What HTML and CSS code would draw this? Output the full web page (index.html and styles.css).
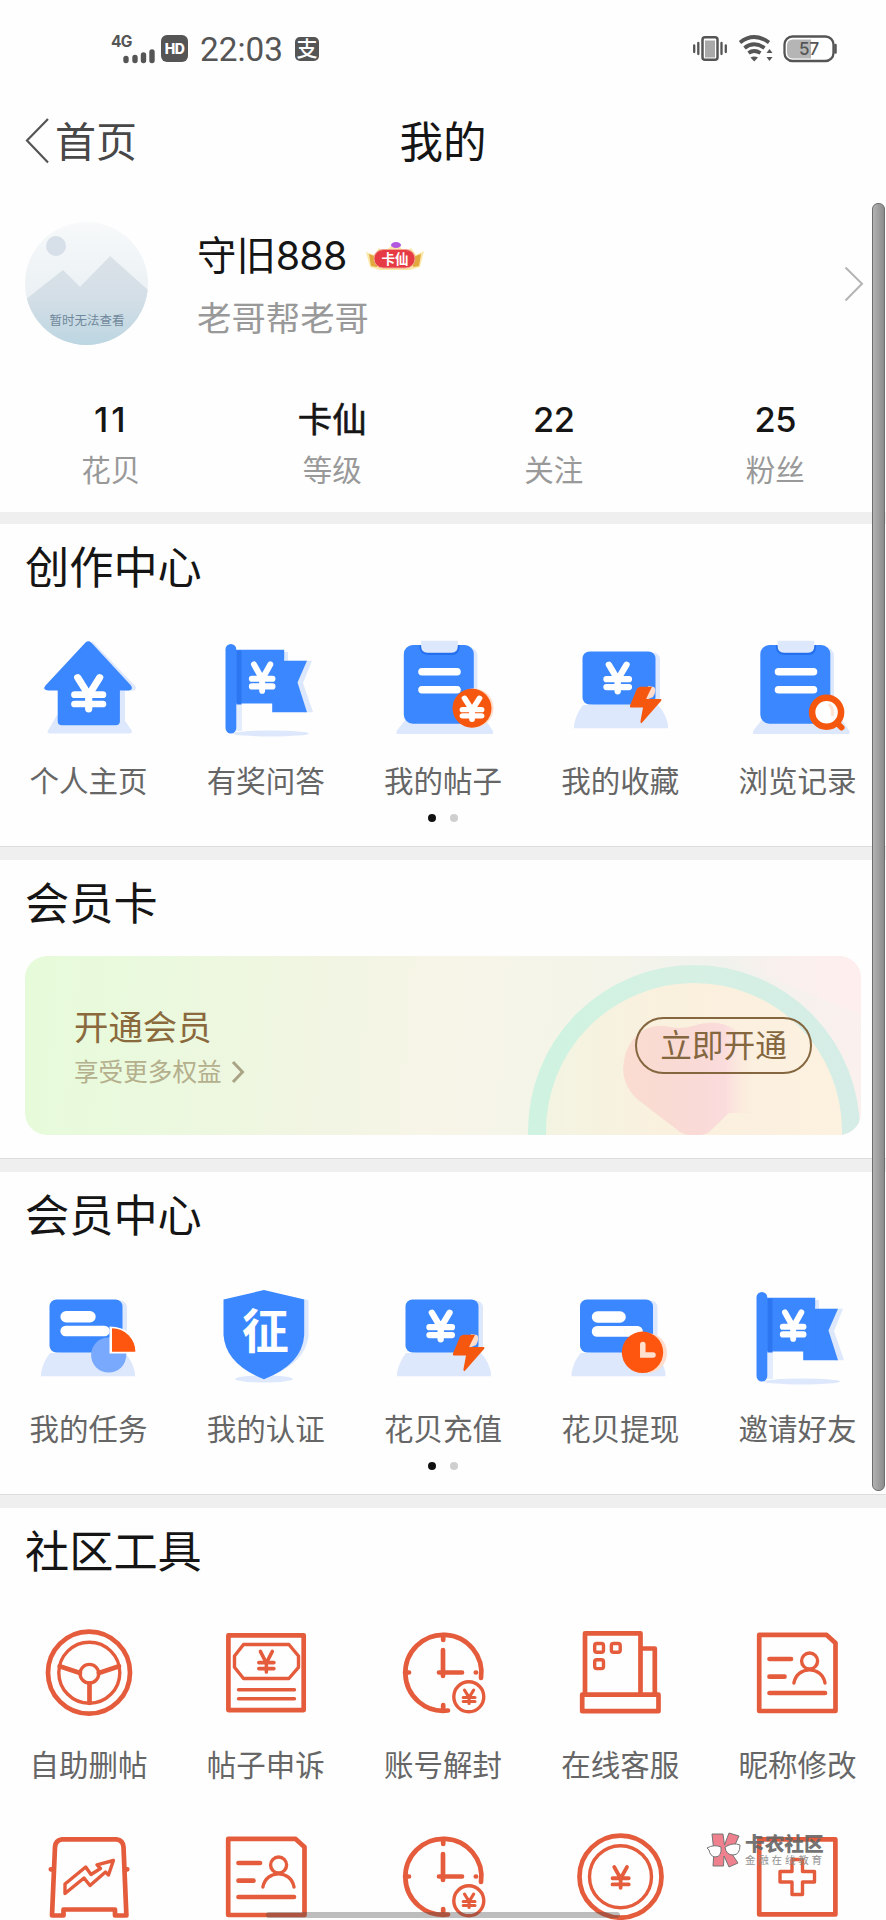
FILE: index.html
```
<!DOCTYPE html>
<html lang="zh-CN">
<head>
<meta charset="utf-8">
<title>我的</title>
<link rel="stylesheet" href="styles.css">
</head>
<body>
<svg class="defs" width="0" height="0" aria-hidden="true">
  <defs>
    <path id="yen" d="M3 0 14 19 25 0M0 18.5H28M0 28.5H28M14 19V34" fill="none" stroke-linecap="round"/>
    <symbol id="i-house" viewBox="0 0 108 108">
      <path d="M22 83H86L97 99Q97 101.500 94 101.500H15Q12 101.500 12.700 99Z" fill="#dde8fc"/>
      <path d="M57 9 101 55Q101 59 96 59H90V91H60Z" fill="#dde8fc"/>
      <path d="M50.500 10.500Q53.400 8 56.200 10.500L96 53.500Q98.500 58 93.500 58.500H84.900V89Q84.900 93.300 80.500 93.300H27Q22.700 93.300 22.700 89V58.500H13.500Q7 58 10.500 53.500Z" fill="#3a87ff"/>
      <use href="#yen" transform="translate(39.700 45.500) scale(1 .93)" stroke="#fff" stroke-width="7.200"/>
    </symbol>
    <symbol id="i-flag" viewBox="0 0 108 108">
      <path d="M70 20H76V28.700H100L91 51 101 80.300H92Z" fill="#dde8fc"/>
      <path d="M24 72H30V99H24Z" fill="#e4edfd"/>
      <ellipse cx="59" cy="101.500" rx="38" ry="3" fill="#dde8fc"/>
      <path d="M60.200 28.700H95L85.500 50.600 95 80.300H60.200Z" fill="#3a87ff"/>
      <path d="M24 17.700H72.200V71.500H24Z" fill="#3a87ff"/>
      <path d="M24.500 18.500H29.500V72.500H24.500Z" fill="#2c76f2"/>
      <rect x="13.500" y="12" width="10.800" height="89.500" rx="5.400" fill="#3a87ff"/>
      <use href="#yen" transform="translate(39.800 32.500) scale(.74 .77)" stroke="#fff" stroke-width="8"/>
    </symbol>
    <symbol id="i-board" viewBox="0 0 108 108" overflow="visible">
      <path d="M22 84H96L106.500 99V102H10V99Z" fill="#dde8fc"/>
      <rect x="22" y="15" width="69" height="76" rx="9" fill="#dde8fc"/>
      <rect x="17.300" y="13" width="70" height="78.700" rx="9" fill="#3a87ff"/>
      <path d="M33 13H73V16Q72 23 66 23H42Q34 23 33 16Z" fill="#246fee"/>
      <path d="M34.600 8.700H71.300V14Q71.300 20.700 65 20.700H41Q34.600 20.700 34.600 14Z" fill="#dde8fc"/>
      <path d="M35.500 39.700H70.500M35.500 57.700H70.500" stroke="#fff" stroke-width="7.600" stroke-linecap="round"/>
    </symbol>
    <symbol id="i-post" viewBox="0 0 108 108">
      <use href="#i-board" x="-2.500" width="108" height="108"/>
      <circle cx="85" cy="76" r="19.500" fill="#ffdccb"/>
      <circle cx="83" cy="76.300" r="19.500" fill="#f6570f"/>
      <use href="#yen" transform="translate(73.500 66.200) scale(.68 .62)" stroke="#fff" stroke-width="8.500"/>
    </symbol>
    <symbol id="i-history" viewBox="0 0 108 108">
      <use href="#i-board" width="108" height="108"/>
      <circle cx="83.600" cy="80.300" r="14.500" fill="#fff" stroke="#f6570f" stroke-width="6.500"/>
      <path d="M86 72Q91 77 89 84" stroke="#ffe3d4" stroke-width="3" fill="none"/>
      <path d="M94 91 98.500 95.500" stroke="#f6570f" stroke-width="6" stroke-linecap="round"/>
    </symbol>
    <symbol id="i-screen" viewBox="0 0 108 108" overflow="visible">
      <path d="M17 73H92Q100 82 102 93V96.300H8V93Q10 82 17 73Z" fill="#dde8fc"/>
      <rect x="22" y="20.500" width="72" height="52.500" rx="7" fill="#dde8fc"/>
      <rect x="16.500" y="19.500" width="73" height="53" rx="7" fill="#3a87ff"/>
    </symbol>
    <symbol id="i-charge" viewBox="0 0 108 108">
      <use href="#i-screen" width="108" height="108"/>
      <use href="#yen" transform="translate(40.500 32.800) scale(.8 .78)" stroke="#fff" stroke-width="8"/>
      <path d="M82 54 88 55Q91 58 87 65L80 68Z" fill="#ffdccb"/>
      <path d="M74 54.700H86L80 67H95Q96 68 95 69L75.500 91.300Q74 91 74.500 89L77 75.500H64.500Q63.500 75 64 73.500L71 56.500Z" fill="#f6570f"/>
    </symbol>
    <symbol id="i-withdraw" viewBox="0 0 108 108">
      <use href="#i-screen" x="-2.500" width="108" height="108"/>
      <rect x="25.800" y="31.300" width="34" height="11.400" rx="5.700" fill="#fff"/>
      <rect x="25.800" y="46" width="51" height="10.700" rx="5.300" fill="#fff"/>
      <circle cx="81" cy="73" r="20" fill="#ffdccb"/>
      <circle cx="76.500" cy="72.300" r="20.700" fill="#ff560f"/>
      <path d="M76.800 64.500V75H87" fill="none" stroke="#ffe0cf" stroke-width="5.500" stroke-linecap="round"/>
    </symbol>
    <symbol id="i-task" viewBox="0 0 108 108">
      <use href="#i-screen" x="-2" width="108" height="108"/>
      <rect x="25.400" y="31" width="35.300" height="11.400" rx="5.700" fill="#fff"/>
      <rect x="25.400" y="45.700" width="49.300" height="10.500" rx="5.200" fill="#fff"/>
      <circle cx="73.700" cy="75" r="17.600" fill="#79a9fc"/>
      <path d="M74.500 73.500V46.500Q101 47 103.500 73.500Z" fill="#fff"/>
      <path d="M77 71.700V48.300A23.400 23.400 0 0 1 100.400 71.700Z" fill="#ff560f"/>
    </symbol>
    <symbol id="i-shield" viewBox="0 0 108 108">
      <ellipse cx="52" cy="99" rx="29" ry="3.500" fill="#dde8fc"/>
      <path d="M57 12 96.500 20V56Q94 82 57 97Z" fill="#dde8fc"/>
      <path d="M52 10 92.200 19.500V55Q90.500 84 52 99.300 13.500 84 11.500 55V19.500Z" fill="#3a87ff"/>
      <text class="shield-text" x="53.200" y="67.500" text-anchor="middle">征</text>
    </symbol>
    <symbol id="i-wheel" viewBox="0 0 108 108">
      <g class="line">
        <circle cx="54" cy="56.700" r="41"/>
        <g class="thin"><circle cx="54.300" cy="56.700" r="30.500"/><circle cx="54.400" cy="57.700" r="9.300"/></g>
        <path d="M45 57 24.700 50.200M63.800 57 84 50.200M54.500 67.500V87"/>
      </g>
    </symbol>
    <symbol id="i-appeal" viewBox="0 0 108 108">
      <g class="line">
        <rect x="16.400" y="19.400" width="75.300" height="74.700"/>
        <g class="thin"><path d="M31.500 28.500H76.900L86.500 40V51.300L76.900 62.500H31.500L22.500 51.300V40Z"/>
        <path d="M26.500 73.700H82.500M26.500 82.700H82.500"/></g>
        <use href="#yen" transform="translate(46.800 35.500) scale(.54 .6)" stroke-width="6.500"/>
      </g>
    </symbol>
    <symbol id="i-unlock" viewBox="0 0 108 108">
      <g class="line">
        <path d="M92 62A38 38 0 1 0 59 94.500"/>
        <path d="M16 56.500H20M54.200 19V24M54.200 89V94M86.800 56.500H87M54 34V60M50 56.500H73"/>
        <g class="thin"><circle cx="79.800" cy="80.800" r="15"/></g>
        <use href="#yen" transform="translate(74.200 74) scale(.42 .4)" stroke-width="7.500"/>
      </g>
    </symbol>
    <symbol id="i-service" viewBox="0 0 108 108">
      <g class="line">
        <path d="M19 78V17.300H74.500V78M76 32.500H88.800V78"/>
        <rect x="16.200" y="78.700" width="76.300" height="16.500"/>
        <g class="thin"><rect x="28.700" y="27.500" width="8.800" height="8.800" rx="2"/><rect x="45.400" y="27.500" width="8.800" height="8.800" rx="2"/><rect x="28.700" y="43.800" width="8.800" height="8.800" rx="2"/></g>
      </g>
    </symbol>
    <symbol id="i-id" viewBox="0 0 108 108">
      <g class="line">
        <path d="M16.200 18.900H83.600L92.500 27V95H16.200Z"/>
        <path d="M26.500 43H48M26.500 60.700H41.500M26.500 77H82"/>
        <g class="thin"><circle cx="66.600" cy="45" r="8"/><path d="M50.900 67C54 49.500 79 49.500 82 67"/></g>
      </g>
    </symbol>
    <symbol id="i-trend" viewBox="0 0 108 108">
      <g class="line">
        <path d="M27 19.300H81.500Q88 20 88.500 27L91.400 95.500H80V89.500H28.500V95.500H17L20 27Q20.500 20 27 19.300Z"/>
        <path d="M15.800 49.300H18M90.500 49.300H92.300"/>
        <path class="thin" d="M30 73.500V64L50.700 47 56 54.500 65.500 48.500 62 44.800 78.400 40.500 73.500 55 70.500 52 55 65.500 49 58Z"/>
      </g>
    </symbol>
    <symbol id="i-coin" viewBox="0 0 108 108">
      <g class="line">
        <circle cx="54.500" cy="56.700" r="41"/>
        <circle class="thin" cx="54.500" cy="56.700" r="31"/>
        <use href="#yen" transform="translate(46.500 47) scale(.58 .61)" stroke-width="6.500"/>
      </g>
    </symbol>
    <symbol id="i-plus" viewBox="0 0 108 108">
      <g class="line">
        <rect x="16.200" y="19.400" width="76.200" height="75"/>
        <path class="thin" d="M49 39.500H59.500V51.500H71.500V62H59.500V74.500H49V62H37V51.500H49Z"/>
      </g>
    </symbol>
  </defs>
</svg>

<div class="page">
  <div class="status">
    <svg class="signal" width="46" height="32" viewBox="0 0 46 32">
      <text x="0" y="14">4G</text>
      <path d="M15 25.500V27.500M24 24.500V27.500M32.500 22V27.500M41 19V27.500" stroke="#555" stroke-width="5.400" stroke-linecap="round"/>
    </svg>
    <span class="hd">HD</span>
    <span class="time">22:03</span>
    <span class="pay">支</span>
    <svg class="vibrate" width="36" height="28" viewBox="0 0 36 28">
      <rect x="10.500" y="2.200" width="15" height="22.600" rx="2.500" fill="#fff" stroke="#555" stroke-width="2.500"/>
      <rect x="13" y="5.500" width="10" height="17" fill="#a9a9a9"/>
      <path d="M6.300 8V19M2.200 10.500V17M29.500 8V19M33.800 10.500V17" stroke="#555" stroke-width="2.300" stroke-linecap="round"/>
    </svg>
    <svg class="wifi" width="36" height="28" viewBox="0 0 36 28">
      <path d="M2 7.500Q16 -3.500 31 7.500M6.500 13Q16 5.500 26.500 13M10.500 18Q16 14 22.500 18" fill="none" stroke="#555" stroke-width="3.800"/>
      <path d="M12.500 22.500Q16 20.500 20 22.500L16.200 26.500Z" fill="#555"/>
      <path d="M28.500 18 31.500 14 34.500 18ZM28.500 22 31.500 26 34.500 22Z" fill="#555"/>
    </svg>
    <svg class="battery" width="56" height="28" viewBox="0 0 56 28">
      <rect x="1.500" y="1.500" width="49" height="24.500" rx="8" fill="#fff" stroke="#555" stroke-width="2.300"/>
      <path d="M10 4.500H28V23.500H10Q4 23.500 4 17V10.500Q4 4.500 10 4.500Z" fill="#b5b5b5"/>
      <path d="M52.500 10V17.500" stroke="#555" stroke-width="2.500" stroke-linecap="round"/>
      <text x="26" y="20" text-anchor="middle">57</text>
    </svg>
  </div>

  <header class="nav">
    <a class="back"><svg width="24" height="48" viewBox="0 0 24 48"><path d="M23 1 2 22.500 23 44.500" fill="none" stroke="#555" stroke-width="2.200"/></svg>首页</a>
    <h1>我的</h1>
    <span></span>
  </header>

  <section class="profile">
    <svg class="avatar" width="123" height="123" viewBox="0 0 123 123">
      <defs>
        <clipPath id="round"><circle cx="61.500" cy="61.500" r="61.500"/></clipPath>
        <linearGradient id="sky" x2="0" y2="1"><stop stop-color="#f7f9fa"/><stop offset="1" stop-color="#e2ebf0"/></linearGradient>
        <linearGradient id="hill" x2="0" y2="1"><stop stop-color="#dbe2e8"/><stop offset=".5" stop-color="#d3dee6"/><stop offset="1" stop-color="#bcd6e2"/></linearGradient>
      </defs>
      <g clip-path="url(#round)">
        <path d="M0 0H123V123H0Z" fill="url(#sky)"/>
        <circle cx="31" cy="24" r="10" fill="#d7e0e8"/>
        <path d="M0 78 38 48 55 65 85 34 123 68V123H0Z" fill="url(#hill)"/>
        <text x="62" y="103" text-anchor="middle">暂时无法查看</text>
      </g>
    </svg>
    <div class="who">
      <div class="name">守旧<span class="num">888</span>
        <svg class="rank" width="60" height="32" viewBox="0 0 60 32">
          <path d="M1 12 9 15 14 8 19 12 30 3 41 12 46 8 51 15 59 11 55 27 45 30H15L5 27Z" fill="#fbe7a8"/>
          <path d="M4 14 12 17V27L6 26ZM56 14 48 17V27L54 26Z" fill="#e0a83d"/>
          <ellipse cx="31" cy="5" rx="5" ry="3" fill="#b457e0"/>
          <rect x="9" y="9.500" width="41" height="18.500" rx="9.200" fill="#e63b45" stroke="#f3a08e" stroke-width="1"/>
          <text x="30" y="23.500" text-anchor="middle">卡仙</text>
        </svg>
      </div>
      <div class="bio">老哥帮老哥</div>
    </div>
    <svg class="more" width="20" height="36" viewBox="0 0 20 36"><path d="M1.500 1.500 18 17.800 1.500 34.500" fill="none" stroke="#b4b4b4" stroke-width="2"/></svg>
  </section>

  <section class="stats">
    <div><b class="ones">11</b><span>花贝</span></div>
    <div><b class="word">卡仙</b><span>等级</span></div>
    <div><b>22</b><span>关注</span></div>
    <div><b>25</b><span>粉丝</span></div>
  </section>

  <section class="panel">
    <h2>创作中心</h2>
    <div class="grid">
      <div class="item"><svg class="icon"><use href="#i-house"/></svg><span>个人主页</span></div>
      <div class="item"><svg class="icon"><use href="#i-flag"/></svg><span>有奖问答</span></div>
      <div class="item"><svg class="icon"><use href="#i-post"/></svg><span>我的帖子</span></div>
      <div class="item"><svg class="icon"><use href="#i-charge"/></svg><span>我的收藏</span></div>
      <div class="item"><svg class="icon"><use href="#i-history"/></svg><span>浏览记录</span></div>
    </div>
    <div class="dots"><i class="on"></i><i></i></div>
  </section>

  <section class="panel vip">
    <h2>会员卡</h2>
    <div class="card">
      <svg class="art" width="836" height="179" viewBox="0 0 836 179">
        <defs>
          <linearGradient id="ring"><stop stop-color="#cff3e0"/><stop offset=".5" stop-color="#d6f0e4"/><stop offset="1" stop-color="#d5ede6"/></linearGradient>
          <linearGradient id="disc"><stop stop-color="#f3f4e2"/><stop offset=".4" stop-color="#faf0de"/><stop offset="1" stop-color="#fdf1e0"/></linearGradient>
          <linearGradient id="heart"><stop stop-color="#fadcd0"/><stop offset=".55" stop-color="#f9dad6"/><stop offset=".75" stop-color="#fbdcdd"/><stop offset="1" stop-color="#fcefdd" stop-opacity="0"/></linearGradient>
          <linearGradient id="corner"><stop stop-color="#fdf0ec" stop-opacity="0"/><stop offset="1" stop-color="#feeeee"/></linearGradient>
        </defs>
        <path d="M690 0H836V58L790 40Z" fill="url(#corner)"/>
        <circle cx="669" cy="175" r="157" fill="url(#disc)" stroke="url(#ring)" stroke-width="18"/>
        <path d="M655 176 612 143Q592 124 601 96 613 67 640 70 655 74 668 70 705 58 725 90 738 120 733 157H704L683 177Q668 183 655 176Z" fill="url(#heart)"/>
      </svg>
      <div class="offer">
        <strong>开通会员</strong>
        <span>享受更多权益<svg width="14" height="24" viewBox="0 0 14 24"><path d="M2 2 11.500 12 2 22" fill="none" stroke="#a9a486" stroke-width="3"/></svg></span>
      </div>
      <span class="open">立即开通</span>
    </div>
  </section>

  <section class="panel">
    <h2>会员中心</h2>
    <div class="grid">
      <div class="item"><svg class="icon"><use href="#i-task"/></svg><span>我的任务</span></div>
      <div class="item"><svg class="icon"><use href="#i-shield"/></svg><span>我的认证</span></div>
      <div class="item"><svg class="icon"><use href="#i-charge"/></svg><span>花贝充值</span></div>
      <div class="item"><svg class="icon"><use href="#i-withdraw"/></svg><span>花贝提现</span></div>
      <div class="item"><svg class="icon"><use href="#i-flag"/></svg><span>邀请好友</span></div>
    </div>
    <div class="dots"><i class="on"></i><i></i></div>
  </section>

  <section class="panel tools">
    <h2>社区工具</h2>
    <div class="grid">
      <div class="item"><svg class="icon"><use href="#i-wheel"/></svg><span>自助删帖</span></div>
      <div class="item"><svg class="icon"><use href="#i-appeal"/></svg><span>帖子申诉</span></div>
      <div class="item"><svg class="icon"><use href="#i-unlock"/></svg><span>账号解封</span></div>
      <div class="item"><svg class="icon"><use href="#i-service"/></svg><span>在线客服</span></div>
      <div class="item"><svg class="icon"><use href="#i-id"/></svg><span>昵称修改</span></div>
      <div class="item"><svg class="icon"><use href="#i-trend"/></svg></div>
      <div class="item"><svg class="icon"><use href="#i-id"/></svg></div>
      <div class="item"><svg class="icon"><use href="#i-unlock"/></svg></div>
      <div class="item"><svg class="icon"><use href="#i-coin"/></svg></div>
      <div class="item"><svg class="icon"><use href="#i-plus"/></svg></div>
    </div>
  </section>

  <div class="watermark">
    <svg width="36" height="36" viewBox="0 0 36 36">
      <path d="M6 2H17L18.500 13 23 1 33 4 28 15 24 19 32 31 23 35 18 24 17.500 34H7L8 20Z" fill="#ee7484" stroke="#666" stroke-width="1"/>
      <path d="M1 16Q8 12 15 15 16 25 9 25 4 24 3 18ZM19 15Q27 10 34 13 34 23 27 23 20 23 19 15Z" fill="#fff" stroke="#666" stroke-width="1"/>
    </svg>
    <div><b>卡农社区</b><span>金融在线教育</span></div>
  </div>
  <div class="scrollbar"></div>
  <div class="homebar"></div>
</div>
</body>
</html>
```
FILE: styles.css
```
* { box-sizing: border-box; }
body {
  margin: 0;
  background: #fefefe;
  color: #151515;
  font-family: Inter, "Noto Sans CJK SC", sans-serif;
}
h1, h2 { margin: 0; font-weight: 400; }
svg { display: block; flex: none; }
.defs { position: absolute; }
.page { position: relative; width: 886px; height: 1920px; overflow: hidden; }

.status { display: flex; align-items: center; height: 97px; padding: 0 47px 0 111px; color: #555; }
.signal { margin-right: 4px; }
.signal text { font: 700 15.500px Inter, sans-serif; fill: #555; letter-spacing: -.8px; }
.hd {
  width: 27px; height: 27px; border-radius: 6px; background: #555; color: #fff;
  font: 800 14px/27px Inter, sans-serif; text-align: center; letter-spacing: -.5px;
}
.time { margin-left: 12px; width: 95px; padding-top: 2px; font: 400 33.300px/40px Roboto, sans-serif; }
.pay {
  width: 24px; height: 24px; border-radius: 5px; background: #555; color: #fff;
  font-size: 21px; line-height: 24px; font-weight: 500; text-align: center; overflow: hidden;
}
.vibrate { margin-left: auto; }
.wifi { margin-left: 10px; }
.battery { margin-left: 9px; }
.battery text { font: 500 17px Inter, sans-serif; fill: #555; }

.nav { display: grid; grid-template-columns: 1fr auto 1fr; align-items: center; height: 90px; padding: 0 25px; }
.back { display: flex; align-items: center; gap: 6px; color: #484848; font-size: 41px; line-height: 60px; }
.nav h1 { font-size: 43.500px; line-height: 60px; }

.profile { display: flex; align-items: flex-start; height: 190px; padding: 35px 22px 0 25px; }
.avatar text { font-size: 12.500px; fill: #70889b; }
.who { margin-left: 49px; }
.name { display: flex; align-items: center; height: 68px; font-size: 39.400px; line-height: 68px; }
.num { letter-spacing: -.8px; }
.rank { margin-left: 18px; }
.rank text { font-size: 13.500px; font-weight: 700; fill: #fff; }
.bio { font-size: 34.400px; line-height: 58px; color: #999; }
.more { margin: 44px 0 0 auto; }

.stats { display: grid; grid-template-columns: repeat(4, 1fr); height: 135px; padding-top: 18px; text-align: center; }
.stats b { display: block; font-size: 34.400px; line-height: 50px; font-weight: 500; letter-spacing: -.4px; }
.stats .ones { letter-spacing: 3px; text-indent: 1px; }
.stats .word { font-weight: 400; letter-spacing: 0; -webkit-text-stroke: .6px #151515; }
.stats span { display: block; font-size: 29.500px; line-height: 50px; color: #999; }

.panel { height: 335px; border-top: 12px solid #efefef; }
.panel h2 { padding-left: 25px; font-size: 44.200px; line-height: 88px; height: 108px; }
.panel + .panel { height: 336px; border-top-width: 13px; box-shadow: 0 -1px #ddd; }
.panel.vip { height: 312px; }
.panel.vip h2 { height: 96px; }
.panel.tools { height: 425px; }
.grid { display: grid; grid-template-columns: repeat(5, 1fr); grid-auto-rows: 204px; }
.item { display: flex; flex-direction: column; align-items: center; }
.icon { width: 108px; height: 108px; }
.item span { margin-top: 19px; font-size: 29.500px; line-height: 44px; color: #666; white-space: nowrap; }
.shield-text { font-size: 47px; font-weight: 700; fill: #fff; }
.line { fill: none; stroke: #e45c3c; stroke-width: 4.700; stroke-linejoin: round; stroke-linecap: round; }
.thin { stroke-width: 3.400; }
.dots { display: flex; gap: 14px; margin: -22px 0 0 428px; }
.dots i { width: 8px; height: 8px; border-radius: 50%; background: #cfcfcf; }
.dots .on { background: #111; }

.card {
  position: relative; display: flex; align-items: center; justify-content: space-between;
  width: 836px; height: 179px; margin-left: 25px; padding: 0 49px; border-radius: 22px; overflow: hidden;
  background: linear-gradient(95deg, #e6fbda 0, #ebf9de 17%, #f1f5e2 35%, #f7f5e8 50%, #f4f4e9 66%, #f1f2ed 82%, #fbf0ee 100%);
}
.art { position: absolute; inset: 0; }
.offer { position: relative; padding-top: 4px; }
.offer strong { display: block; font-weight: 400; font-size: 34.400px; line-height: 48px; color: #8a6a3c; }
.offer span { display: flex; align-items: center; gap: 9px; font-size: 24.600px; line-height: 40px; color: #b4af8c; }
.open {
  position: relative; width: 177px; height: 57px; border: 2.500px solid #84663f; border-radius: 29px;
  font-size: 31.700px; line-height: 54px; text-align: center; color: #84663f;
}

.watermark { position: absolute; left: 706px; top: 1832px; display: flex; gap: 3px; color: #666; opacity: .9; }
.watermark b { display: block; font-size: 19.700px; line-height: 24px; font-weight: 900; }
.watermark span { display: block; font-size: 10.500px; line-height: 10px; letter-spacing: 2.800px; white-space: nowrap; color: #888; }
.scrollbar {
  position: absolute; left: 872px; top: 203px; width: 13px; height: 1288px; border-radius: 6px;
  border: 1.500px solid #6d6d6d; background: linear-gradient(90deg, #b2b2b2, #8c8c8c);
}
.homebar { position: absolute; left: 266px; top: 1912px; width: 354px; height: 6px; border-radius: 3px; background: rgba(70, 70, 70, .35); }
```
